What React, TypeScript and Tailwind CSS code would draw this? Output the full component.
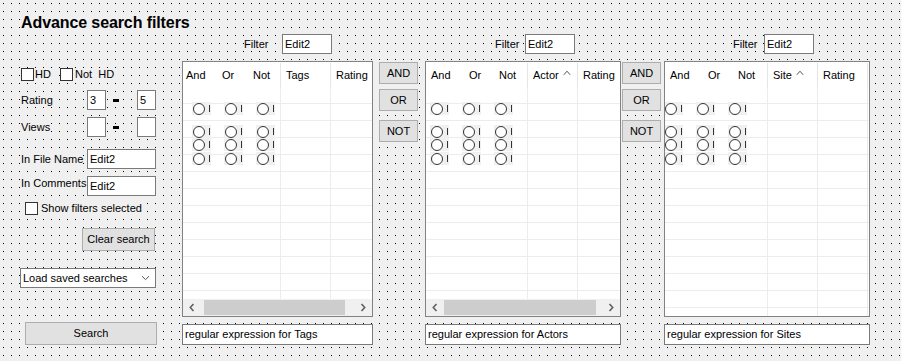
import React from "react";

function CheckBox() {
    return <div className="w-[13px] h-[13px] border border-[#333333] bg-white shrink-0" />;
}

function Label({ children, className = "" }: { children: React.ReactNode; className?: string }) {
    return <span className={`bg-[#f0f0f0] ${className}`}>{children}</span>;
}

function Button({ label, className }: { label: string; className: string }) {
    return (
        <div className={`bg-[#e1e1e1] border border-[#adadad] flex items-center justify-center ${className}`}>
            {label}
        </div>
    );
}

function Edit({ text = "", className }: { text?: string; className: string }) {
    return (
        <div className={`bg-white border border-[#7a7a7a] flex items-center pl-[2px] shrink-0 ${className}`}>
            {text}
        </div>
    );
}

function Chevron({ dir }: { dir: "left" | "right" }) {
    return (
        <svg width="6" height="9" viewBox="0 0 6 9">
            <path
                d={dir === "left" ? "M4.5 1 L1.3 4.5 L4.5 8" : "M1.5 1 L4.7 4.5 L1.5 8"}
                fill="none"
                stroke="#606060"
                strokeWidth="1.6"
            />
        </svg>
    );
}

function SortUp() {
    return (
        <svg width="8" height="6" viewBox="0 0 8 6" className="ml-[4px] mb-[4px]">
            <path d="M0.8 4.8 L4 1.2 L7.2 4.8" fill="none" stroke="#555555" strokeWidth="1" />
        </svg>
    );
}

function Radio() {
    return (
        <div className="w-[32px] shrink-0">
            <div className="w-[19px] h-[13px] bg-[#f0f0f0] flex items-center pl-[1px]">
                <div className="w-[12px] h-[12px] rounded-full border border-[#333333] bg-white" />
                <div className="ml-[4px] w-[1px] h-[7px] bg-[#333333]" />
            </div>
        </div>
    );
}

function RadioRow({ className = "" }: { className?: string }) {
    return (
        <div className={`flex ${className}`}>
            <Radio />
            <Radio />
            <Radio />
        </div>
    );
}

type GridProps = {
    firstCol: string;
    labels: { pl: string; andW: string; orW: string };
    col2: string;
    sorted?: boolean;
    radioLeft: string;
    thumb?: string;
    width: string;
};

function DataGrid({ firstCol, labels, col2, sorted, radioLeft, thumb, width }: GridProps) {
    const rows = Array.from({ length: 14 });
    return (
        <div className={`relative h-[256px] border border-[#828282] bg-white flex flex-col overflow-hidden ${width}`}>
            <div className="flex h-[25px] shrink-0 pt-px">
                <div className={`${firstCol} shrink-0 border-r border-[#e5e5e5] flex items-center ${labels.pl}`}>
                    <span className={labels.andW}>And</span>
                    <span className={labels.orW}>Or</span>
                    <span>Not</span>
                </div>
                <div className="w-[50px] shrink-0 border-r border-[#e5e5e5] flex items-center pl-[5px]">
                    {col2}
                    {sorted && <SortUp />}
                </div>
                <div className="w-[50px] shrink-0 border-r border-[#e5e5e5] flex items-center pl-[5px]">
                    Rating
                </div>
            </div>
            <div className="flex-1 overflow-hidden">
                {rows.map((_, i) => (
                    <div key={i} className="flex h-[17px] border-b border-[#ececec]">
                        <div className={`${firstCol} shrink-0 border-r border-[#ececec]`} />
                        <div className="w-[50px] shrink-0 border-r border-[#ececec]" />
                        <div className="w-[50px] shrink-0 border-r border-[#ececec]" />
                    </div>
                ))}
            </div>
            {thumb && (
                <div className="h-[17px] shrink-0 bg-[#f0f0f0] flex items-center">
                    <div className="w-[17px] flex justify-center pl-[1px]">
                        <Chevron dir="left" />
                    </div>
                    <div className={`h-[15px] bg-[#cdcdcd] ${thumb}`} />
                    <div className="ml-auto w-[17px] flex justify-center pr-[1px]">
                        <Chevron dir="right" />
                    </div>
                </div>
            )}
            {/* radio groups dropped on top of the grid */}
            <div className={`absolute top-[40px] flex flex-col ${radioLeft}`}>
                <RadioRow />
                <RadioRow className="mt-[10px]" />
                <RadioRow className="mt-0" />
                <RadioRow className="mt-px" />
            </div>
        </div>
    );
}

function ButtonStack({ className }: { className: string }) {
    return (
        <div className={`w-[39px] shrink-0 mt-[28px] flex flex-col ${className}`}>
            <Button label="AND" className="h-[22px]" />
            <Button label="OR" className="h-[22px] mt-[5px]" />
            <Button label="NOT" className="h-[22px] mt-[9px]" />
        </div>
    );
}

export default function App() {
    return (
        <div className="w-[901px] h-[361px] overflow-hidden bg-[#f0f0f0] bg-[conic-gradient(from_270deg_at_1px_1px,#000_90deg,transparent_0)] bg-[length:8px_8px] bg-size-[8px_8px] bg-[position:3px_3px] bg-position-[3px_3px] font-['Liberation_Sans',Arial,sans-serif] text-[11px] text-black leading-[13px]">
            <div className="h-[34px] pt-[14px] pl-[21px]">
                <span className="text-[16px] leading-[18px] font-bold bg-[#f0f0f0] tracking-[-0.1px]">Advance search filters</span>
            </div>

            <div className="flex">
                {/* left options */}
                <div className="w-[182px] shrink-0 pl-[21px] pt-[34px] flex flex-col">
                    <div className="flex items-center h-[13px]">
                        <div className="w-[39px] flex items-center">
                            <CheckBox />
                            <Label className="pl-[1px] pr-[2px]">HD</Label>
                        </div>
                        <CheckBox />
                        <Label className="pl-[2px] pr-[2px]">Not{"\u00a0\u00a0"}HD</Label>
                    </div>

                    <div className="flex items-center h-[20px] mt-[9px]">
                        <div className="w-[66px]">
                            <Label>Rating</Label>
                        </div>
                        <Edit text="3" className="w-[19px] h-[20px]" />
                        <div className="ml-[6px] w-[8px] h-[5px] bg-[#f0f0f0] flex items-center justify-center">
                            <div className="w-[6px] h-[3px] bg-black" />
                        </div>
                        <Edit text="5" className="ml-[17px] w-[19px] h-[20px]" />
                    </div>

                    <div className="flex items-center h-[20px] mt-[7px]">
                        <div className="w-[66px]">
                            <Label>Views</Label>
                        </div>
                        <Edit className="w-[19px] h-[20px]" />
                        <div className="ml-[6px] w-[8px] h-[5px] bg-[#f0f0f0] flex items-center justify-center">
                            <div className="w-[6px] h-[3px] bg-black" />
                        </div>
                        <Edit className="ml-[17px] w-[19px] h-[20px]" />
                    </div>

                    <div className="flex items-center h-[20px] mt-[12px]">
                        <div className="w-[66px]">
                            <Label>In File Name</Label>
                        </div>
                        <Edit text="Edit2" className="w-[69px] h-[20px]" />
                    </div>

                    <div className="flex items-start h-[20px] mt-[7px]">
                        <div className="w-[66px] pt-[1px]">
                            <Label>In Comments</Label>
                        </div>
                        <Edit text="Edit2" className="w-[69px] h-[20px]" />
                    </div>

                    <div className="flex items-center h-[13px] mt-[6px] pl-[4px]">
                        <CheckBox />
                        <Label className="pl-[3px] pr-[2px]">Show filters selected</Label>
                    </div>

                    <Button label="Clear search" className="mt-[13px] ml-[61px] w-[73px] h-[23px]" />

                    <div className="mt-[17px] -ml-px w-[136px] h-[20px] bg-white border border-[#7a7a7a] flex items-center pl-[2px] pr-[5px]">
                        <span>Load saved searches</span>
                        <svg width="9" height="6" viewBox="0 0 9 6" className="ml-auto">
                            <path d="M1 1.2 L4.5 4.6 L8 1.2" fill="none" stroke="#555555" strokeWidth="1" />
                        </svg>
                    </div>

                    <Button label="Search" className="mt-[34px] ml-[4px] w-[132px] h-[23px]" />
                </div>

                {/* tags */}
                <div className="w-[191px] shrink-0 flex flex-col">
                    <div className="flex items-center h-[20px] pl-[62px]">
                        <div className="w-[38px]">
                            <Label className="pr-[1px]">Filter</Label>
                        </div>
                        <Edit text="Edit2" className="w-[50px] h-[20px]" />
                    </div>
                    <div className="mt-[7px]">
                        <DataGrid
                            width="w-[191px]"
                            firstCol="w-[98px]"
                            labels={{ pl: "pl-[3px]", andW: "w-[36px]", orW: "w-[31px]" }}
                            col2="Tags"
                            radioLeft="left-[9px]"
                            thumb="ml-[4px] w-[141px]"
                        />
                    </div>
                    <Edit text="regular expression for Tags" className="mt-[7px] w-[191px] h-[21px]" />
                </div>

                <ButtonStack className="ml-[6px]" />

                {/* actors */}
                <div className="ml-[7px] w-[196px] shrink-0 flex flex-col">
                    <div className="flex items-center h-[20px] pl-[70px]">
                        <div className="w-[30px]">
                            <Label className="pr-[1px]">Filter</Label>
                        </div>
                        <Edit text="Edit2" className="w-[50px] h-[20px]" />
                    </div>
                    <div className="mt-[7px]">
                        <DataGrid
                            width="w-[196px]"
                            firstCol="w-[102px]"
                            labels={{ pl: "pl-[5px]", andW: "w-[38px]", orW: "w-[30px]" }}
                            col2="Actor"
                            sorted
                            radioLeft="left-[4px]"
                            thumb="ml-[1px] w-[152px]"
                        />
                    </div>
                    <Edit text="regular expression for Actors" className="mt-[7px] w-[196px] h-[21px]" />
                </div>

                <ButtonStack className="ml-[1px]" />

                {/* sites */}
                <div className="ml-[3px] w-[206px] shrink-0 flex flex-col">
                    <div className="flex items-center h-[20px] pl-[69px]">
                        <div className="w-[31px]">
                            <Label className="pr-[1px]">Filter</Label>
                        </div>
                        <Edit text="Edit2" className="w-[50px] h-[20px]" />
                    </div>
                    <div className="mt-[7px]">
                        <DataGrid
                            width="w-[206px]"
                            firstCol="w-[103px]"
                            labels={{ pl: "pl-[5px]", andW: "w-[38px]", orW: "w-[30px]" }}
                            col2="Site"
                            sorted
                            radioLeft="-left-px"
                        />
                    </div>
                    <Edit text="regular expression for Sites" className="mt-[7px] w-[206px] h-[21px]" />
                </div>
            </div>
        </div>
    );
}
